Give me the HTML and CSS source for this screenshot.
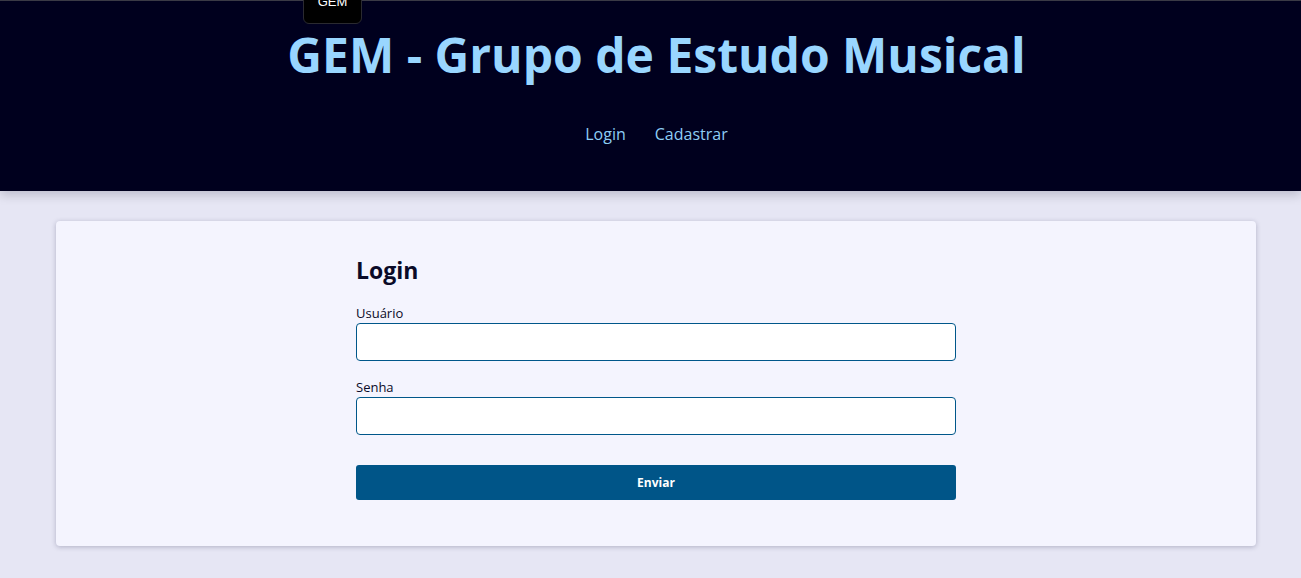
FILE: index.html
```html
<!DOCTYPE html>
<html lang="pt-BR">
<head>
<meta charset="utf-8">
<title>GEM - Grupo de Estudo Musical</title>
<link rel="stylesheet" href="styles.css">
</head>
<body>
<header class="site-header">
  <div class="tooltip">GEM</div>
  <h1 class="site-title">GEM - Grupo de Estudo Musical</h1>
  <nav class="site-nav">
    <a href="#" class="nav-link">Login</a>
    <a href="#" class="nav-link">Cadastrar</a>
  </nav>
</header>
<main class="main">
  <section class="card">
    <form class="login-form">
      <h2 class="form-title">Login</h2>
      <label class="field">
        <span class="field-label">Usuário</span>
        <input class="field-input" type="text">
      </label>
      <label class="field">
        <span class="field-label">Senha</span>
        <input class="field-input" type="password">
      </label>
      <button class="submit" type="button">Enviar</button>
    </form>
  </section>
</main>
</body>
</html>
```
FILE: styles.css
```css
* { box-sizing: border-box; }
html, body { margin: 0; padding: 0; }
body {
  background: #e6e6f4;
  font-family: "Open Sans", "Noto Sans", sans-serif;
  color: #0a0a28;
  min-height: 578px;
}
.site-header {
  position: relative;
  background: #00001e;
  border-top: 1px solid #3a3a46;
  height: 191px;
  box-shadow: 0 4px 10px rgba(0, 0, 30, 0.18);
  text-align: center;
  padding-top: 22px;
}
.tooltip {
  position: absolute;
  left: 303px;
  top: -12px;
  width: 59px;
  height: 35px;
  background: #000;
  border: 1px solid #2a2a30;
  border-radius: 6px;
  color: #fff;
  font-family: "Liberation Sans", Arial, sans-serif;
  font-size: 13px;
  line-height: 1;
  padding-top: 5px;
  text-align: center;
}
.site-title {
  margin: 0;
  padding-left: 12px;
  font-size: 48px;
  font-weight: 700;
  color: #99d6ff;
  line-height: 64px;
}
.site-nav {
  display: flex;
  justify-content: center;
  gap: 29px;
  margin-top: 36px;
  padding-left: 12px;
}
.nav-link {
  color: #8ecdf5;
  text-decoration: none;
  font-size: 16px;
}
.main {
  padding: 30px 45px 31px 56px;
}
.card {
  background: #f4f4fe;
  border-radius: 4px;
  box-shadow: 0 1px 5px rgba(40, 40, 80, 0.28);
  padding: 34px 0 46px;
  display: flex;
  justify-content: center;
}
.login-form {
  width: 600px;
  display: flex;
  flex-direction: column;
}
.form-title {
  margin: 0 0 19px;
  font-size: 23px;
  font-weight: 700;
  line-height: 30px;
}
.field {
  display: flex;
  flex-direction: column;
  margin-bottom: 17px;
}
.field-label {
  font-size: 13px;
  line-height: 19px;
  color: #0a0a28;
}
.field-input {
  height: 38px;
  border: 1px solid #00578a;
  border-radius: 4px;
  background: #fff;
  font: inherit;
  padding: 0 10px;
}
.submit {
  margin-top: 13px;
  height: 35px;
  background: #005588;
  color: #fff;
  border: none;
  border-radius: 3px;
  font-family: inherit;
  font-size: 12px;
  font-weight: 700;
}
```
